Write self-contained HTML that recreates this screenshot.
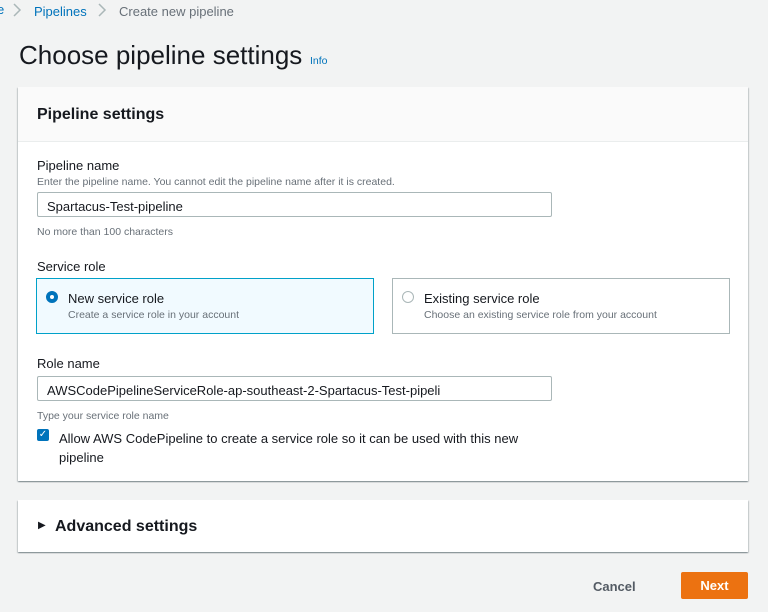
<!DOCTYPE html>
<html><head><style>
body{margin:0;width:768px;height:612px;background:#f2f3f3;font-family:"Liberation Sans",sans-serif;color:#16191f;position:relative;overflow:hidden}
.a{position:absolute;white-space:nowrap}
.card{position:absolute;background:#fff;box-shadow:0 1px 1px rgba(0,28,36,.3),1px 1px 1px rgba(0,28,36,.15),-1px 1px 1px rgba(0,28,36,.15)}
.inp{position:absolute;border:1px solid #aab7b8;background:#fff;border-radius:2px;height:25px;box-sizing:border-box;font-size:13px;padding:5px 9px}
.sm{font-size:10.5px;color:#687078}
.lbl{font-size:13px}
</style></head><body>
<div class="a" style="left:-3px;top:2px;font-size:13px;color:#0073bb">e</div>
<svg class="a" style="left:12px;top:3px" width="10" height="14"><polyline points="2,1 8,7 2,13" fill="none" stroke="#aab7b8" stroke-width="1.5"/></svg>
<div class="a" style="left:34px;top:4px;font-size:13px;color:#0073bb">Pipelines</div>
<svg class="a" style="left:97px;top:3px" width="10" height="14"><polyline points="2,1 8,7 2,13" fill="none" stroke="#aab7b8" stroke-width="1.5"/></svg>
<div class="a" style="left:119px;top:4px;font-size:13px;color:#687078">Create new pipeline</div>
<div class="a" style="left:19px;top:40px;font-size:26px;color:#16191f">Choose pipeline settings</div>
<div class="a" style="left:310px;top:55px;font-size:10.5px;color:#0073bb">Info</div>

<div class="card" style="left:18px;top:87px;width:730px;height:394px">
 <div style="height:54px;background:#fafafa;border-bottom:1px solid #eaeded"></div>
 <div class="a" style="left:19px;top:19px;font-size:16px;font-weight:bold">Pipeline settings</div>
 <div class="a lbl" style="left:19px;top:71px">Pipeline name</div>
 <div class="a sm" style="left:19px;top:89px">Enter the pipeline name. You cannot edit the pipeline name after it is created.</div>
 <div class="inp" style="left:19px;top:105px;width:515px;padding-top:6px">Spartacus-Test-pipeline</div>
 <div class="a sm" style="left:19px;top:139px">No more than 100 characters</div>
 <div class="a lbl" style="left:19px;top:172px">Service role</div>
 <div class="a" style="left:18px;top:191px;width:338px;height:56px;box-sizing:border-box;border:1px solid #00a1c9;background:#f1faff"></div>
 <div class="a" style="left:28px;top:204px;width:12px;height:12px;border-radius:50%;border:4px solid #0073bb;box-sizing:border-box;background:#fff"></div>
 <div class="a lbl" style="left:50px;top:204px">New service role</div>
 <div class="a sm" style="left:50px;top:222px">Create a service role in your account</div>
 <div class="a" style="left:374px;top:191px;width:338px;height:56px;box-sizing:border-box;border:1px solid #aab7b8"></div>
 <div class="a" style="left:384px;top:204px;width:12px;height:12px;border-radius:50%;border:1px solid #aab7b8;box-sizing:border-box"></div>
 <div class="a lbl" style="left:406px;top:204px">Existing service role</div>
 <div class="a sm" style="left:406px;top:222px">Choose an existing service role from your account</div>
 <div class="a lbl" style="left:19px;top:269px">Role name</div>
 <div class="inp" style="left:19px;top:289px;width:515px;padding-top:6px">AWSCodePipelineServiceRole-ap-southeast-2-Spartacus-Test-pipeli</div>
 <div class="a sm" style="left:19px;top:323px">Type your service role name</div>
 <div class="a" style="left:19px;top:342px;width:12px;height:12px;background:#0073bb;border-radius:2px;color:#fff;font-size:10px;line-height:12px;text-align:center">✓</div>
 <div class="a lbl" style="left:41px;top:342px;line-height:19px">Allow AWS CodePipeline to create a service role so it can be used with this new<br>pipeline</div>
</div>

<div class="card" style="left:18px;top:500px;width:730px;height:52px">
 <div class="a" style="left:20px;top:20px;font-size:10px">▶</div>
 <div class="a" style="left:37px;top:18px;font-size:16px;font-weight:bold">Advanced settings</div>
</div>
<div class="a" style="left:593px;top:579px;font-size:13px;font-weight:bold;color:#545b64">Cancel</div>
<div class="a" style="left:681px;top:572px;width:67px;height:27px;background:#ec7211;border-radius:2px;color:#fff;font-size:13px;font-weight:bold;text-align:center;line-height:27px">Next</div>
</body></html>
